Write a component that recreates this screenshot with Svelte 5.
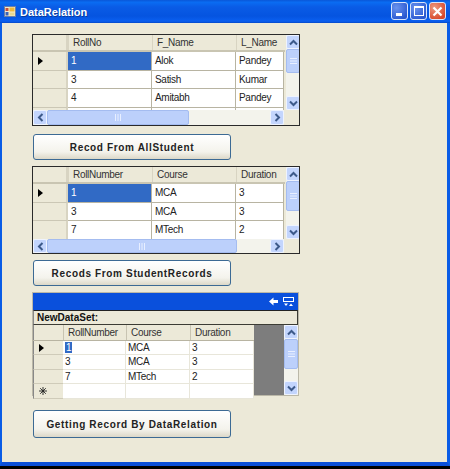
<script>
  const g1 = { h: 92, top: 75, vt: 24, cols: [['RollNo', 84], ['F_Name', 84], ['L_Name', 48]], rows: [['1','Alok','Pandey'],['3','Satish','Kumar'],['4','Amitabh','Pandey'],['','','']], thumb: 142 };
  const g2 = { h: 88, top: 72, vt: 30, cols: [['RollNumber', 84], ['Course', 84], ['Duration', 48]], rows: [['1','MCA','3'],['3','MCA','3'],['7','MTech','2']], thumb: 190 };
  const g3 = [['1','MCA','3'],['3','MCA','3'],['7','MTech','2'],['','','']];
</script>

{#snippet up()}
  <svg width="9" height="7" viewBox="0 0 9 7"><path d="M1 5.5L4.5 2L8 5.5" fill="none" stroke="#3d5a8a" stroke-width="2"/></svg>
{/snippet}
{#snippet down()}
  <svg width="9" height="7" viewBox="0 0 9 7"><path d="M1 1.5L4.5 5L8 1.5" fill="none" stroke="#3d5a8a" stroke-width="2"/></svg>
{/snippet}
{#snippet lines()}
  <svg width="7" height="8" viewBox="0 0 7 8"><path d="M0 1.5H7M0 4H7M0 6.5H7" stroke="#e8efff" stroke-width="1"/></svg>
{/snippet}
{#snippet marker()}
  <svg width="5" height="8" viewBox="0 0 5 8"><path d="M0 0L5 4L0 8Z" fill="#000"/></svg>
{/snippet}

{#snippet datagrid(g)}
  <div class="grid" style="height:{g.h}px">
    <div class="top" style="height:{g.top}px">
      <div class="table">
        <div class="tr head">
          <div class="rh"></div>
          {#each g.cols as c}<div class="th" style="width:{c[1]}px">{c[0]}</div>{/each}
        </div>
        {#each g.rows as r, i}
          <div class="tr body">
            <div class="rh">{#if i === 0}{@render marker()}{/if}</div>
            {#each r as v, j}
              <div class="td" class:sel={i === 0 && j === 0} style="width:{g.cols[j][1]}px">{v}</div>
            {/each}
          </div>
        {/each}
      </div>
      <div class="vbar">
        <div class="sbtn">{@render up()}</div>
        <div class="vthumb" style="height:{g.vt}px">{@render lines()}</div>
        <div class="vtrack"></div>
        <div class="sbtn">{@render down()}</div>
      </div>
    </div>
    <div class="hbar">
      <div class="hbtn"><svg width="7" height="9" viewBox="0 0 7 9"><path d="M5.5 1L2 4.5L5.5 8" fill="none" stroke="#3d5a8a" stroke-width="2"/></svg></div>
      <div class="hthumb" style="width:{g.thumb}px"><svg width="8" height="7" viewBox="0 0 8 7"><path d="M1.5 0V7M4 0V7M6.5 0V7" stroke="#e8efff"/></svg></div>
      <div class="htrack"></div>
      <div class="hbtn"><svg width="7" height="9" viewBox="0 0 7 9"><path d="M1.5 1L5 4.5L1.5 8" fill="none" stroke="#3d5a8a" stroke-width="2"/></svg></div>
      <div class="corner"></div>
    </div>
  </div>
{/snippet}

<div class="window">
  <header class="titlebar">
    <svg class="appicon" width="12" height="11" viewBox="0 0 12 11">
      <rect x="0.5" y="0.5" width="11" height="10" fill="#f2ead0" stroke="#6a7fa8"/>
      <rect x="1.5" y="2" width="3" height="3" fill="#c8503a"/>
      <rect x="5.5" y="1.5" width="5" height="4" fill="#f0b838"/>
      <rect x="1.5" y="6" width="3" height="3.5" fill="#3a62b8"/>
      <rect x="5.5" y="6.5" width="5" height="3" fill="#e8d890"/>
    </svg>
    <span class="title">DataRelation</span>
    <div class="controls">
      <div class="wbtn"><span class="min"></span></div>
      <div class="wbtn"><span class="max"></span></div>
      <div class="wbtn close">
        <svg width="11" height="11" viewBox="0 0 11 11"><path d="M1.5 1.5L9.5 9.5M9.5 1.5L1.5 9.5" stroke="#fff" stroke-width="2.2"/></svg>
      </div>
    </div>
  </header>
  <main class="client">
    {@render datagrid(g1)}
    <button class="btn b1">Recod From AllStudent</button>
    {@render datagrid(g2)}
    <button class="btn b2">Recods From StudentRecords</button>
    <div class="dg">
      <div class="caption">
        <svg width="9" height="9" viewBox="0 0 9 9"><path d="M0 4.5L4.5 0.5V3H9V6H4.5V8.5Z" fill="#fff"/></svg>
        <svg width="11" height="10" viewBox="0 0 11 10"><rect x="0.5" y="0.5" width="10" height="4" fill="none" stroke="#fff"/><path d="M1 6.5H5L3 9ZM6 9H10L8 6.5Z" fill="#fff"/></svg>
      </div>
      <div class="parent">NewDataSet:</div>
      <div class="dgmain">
        <div class="dgtable">
          <div class="dtr dhead">
            <div class="drh"></div>
            <div class="dth c1">RollNumber</div>
            <div class="dth c2">Course</div>
            <div class="dth c3">Duration</div>
          </div>
          {#each g3 as r, i}
            <div class="dtr">
              <div class="drh">
                {#if i === 0}{@render marker()}{/if}
                {#if i === 3}
                  <svg width="8" height="8" viewBox="0 0 8 8"><path d="M4 0V8M0 4H8M1.2 1.2L6.8 6.8M6.8 1.2L1.2 6.8" stroke="#222" stroke-width="0.9"/></svg>
                {/if}
              </div>
              <div class="dtd c1">{#if i === 0}<span class="hl">{r[0]}</span>{:else}{r[0]}{/if}</div>
              <div class="dtd c2">{r[1]}</div>
              <div class="dtd c3">{r[2]}</div>
            </div>
          {/each}
        </div>
        <div class="dgback"></div>
        <div class="vbar dvbar">
          <div class="sbtn">{@render up()}</div>
          <div class="vthumb dthumb">{@render lines()}</div>
          <div class="vtrack"></div>
          <div class="sbtn">{@render down()}</div>
        </div>
      </div>
    </div>
    <button class="btn b3">Getting Record By DataRelation</button>
  </main>
</div>

<style>
  :global(body) { margin: 0; background: #000; }
  * { box-sizing: border-box; }
  .window {
    width: 450px; height: 469px; display: flex; flex-direction: column; background: #000;
    font-family: "Liberation Sans", Arial, sans-serif; font-size: 10px; letter-spacing: -0.3px; color: #222;
  }
  .titlebar {
    height: 23px; flex: none; display: flex; align-items: center; padding: 0 4px;
    background: linear-gradient(#0a57d8 0%, #0a6cf2 10%, #0a5ce6 30%, #0554e0 70%, #0a5ff0 92%, #0648c8 100%);
  }
  .appicon { margin-right: 4px; }
  .title { color: #fff; font-weight: 700; font-size: 11px; letter-spacing: 0; text-shadow: 1px 1px 0 #0a3a9c; }
  .controls { margin-left: auto; display: flex; gap: 2px; margin-top: -1px; }
  .wbtn {
    width: 17px; height: 18px; border: 1px solid #d8e4fa; border-radius: 3px; position: relative;
    background: radial-gradient(circle at 30% 30%, #6a93ee, #2a58d0 80%);
    display: flex; align-items: center; justify-content: center;
  }
  .wbtn.close { background: radial-gradient(circle at 30% 30%, #ec9a80, #d8482a 80%); }
  .min { position: absolute; left: 4px; bottom: 3px; width: 6px; height: 3px; background: #fff; }
  .max { width: 10px; height: 10px; border: 1px solid #fff; border-top-width: 2px; }
  .client {
    flex: none; height: 443px; padding: 11px 0 0 30px;
    background: #ece9d8;
    border-left: 2px solid #0a5ce6; border-right: 3px solid #0a5ce6; border-bottom: 4px solid #0a4fd8;
  }

  .grid {
    width: 268px; border: 1px solid #2a2a2a; background: #ece9d8;
    display: flex; flex-direction: column; overflow: hidden;
  }
  .top { flex: none; display: flex; overflow: hidden; }
  .table { width: 252px; flex: none; overflow: hidden; }
  .tr { display: flex; }
  .tr.head { height: 17px; border-bottom: 2px solid #c9c5b2; }
  .tr.body { height: 18.6px; }
  .rh {
    width: 35px; flex: none; background: #ece9d8; border-bottom: 1px solid #cbc7b5; border-right: 2px solid #d8d4c2;
    display: flex; align-items: center; padding-left: 5px;
  }
  .head .rh { border-bottom: 0; }
  .th { padding-left: 4px; line-height: 16px; background: #ece9d8; border-left: 1px solid #d8d4c2; color: #333; }
  .td {
    background: #fff; padding-left: 3px; line-height: 17px; border-right: 1px solid #b8b4a2; border-bottom: 1px solid #b8b4a2;
  }
  .td.sel { background: #316ac5; color: #fff; }
  .vbar { width: 14px; flex: none; margin-left: 1px; background: #f3f3ec; display: flex; flex-direction: column; }
  .sbtn {
    height: 14px; flex: none; background: #c3d5fd; border: 1px solid #eef3ff; border-radius: 2px;
    display: flex; align-items: center; justify-content: center;
  }
  .vthumb {
    flex: none; background: #bcd0fb; border: 1px solid #a4bcf0; border-radius: 2px;
    display: flex; align-items: center; justify-content: center;
  }
  .vtrack { flex: 1; }
  .hbar { flex: 1; display: flex; background: #f3f3ec; }
  .hbtn {
    width: 14px; flex: none; background: #c3d5fd; border: 1px solid #eef3ff; border-radius: 2px;
    display: flex; align-items: center; justify-content: center;
  }
  .hthumb {
    flex: none; background: #bcd0fb; border: 1px solid #a4bcf0; border-radius: 2px;
    display: flex; align-items: center; justify-content: center;
  }
  .htrack { flex: 1; }
  .corner { width: 15px; flex: none; background: #ece9d8; }

  .btn {
    display: block; width: 198px; height: 26px; margin-left: 1px; padding: 0;
    font: inherit; font-size: 10px; font-weight: 700; letter-spacing: 0.65px; color: #222;
    border: 1px solid #3c6a94; border-radius: 3px;
    background: linear-gradient(#fff, #f4f3ec 70%, #dcd8c8);
  }
  .b1 { margin-top: 8px; margin-bottom: 6px; }
  .b2 { margin-top: 6px; margin-bottom: 6px; }
  .b3 { margin-top: 14px; height: 28px; }

  .dg { width: 267px; height: 104px; background: #ece9d8; border: 1px solid #bbb8a8; }
  .caption {
    height: 17px; background: #0a50dc; display: flex; align-items: center; justify-content: flex-end; gap: 5px; padding-right: 4px;
  }
  .parent {
    height: 15px; line-height: 14px; font-size: 10px; letter-spacing: 0; font-weight: 700; color: #111; padding-left: 3px; background: #ece9d8;
    border: 1px solid #3c3c34; border-top-color: #222; border-left-color: #888;
  }
  .dgmain { display: flex; height: 70px; }
  .dgtable { width: 221px; flex: none; background: #fff; }
  .dtr { display: flex; height: 14.4px; }
  .dhead { height: 16px; background: #ece9d8; border-bottom: 1px solid #b8b4a2; }
  .drh {
    width: 30px; flex: none; background: #ece9d8; border-bottom: 1px solid #cfcbb9;
    display: flex; align-items: center; padding-left: 5px; border-left: 1px solid #888;
  }
  .dhead .drh { border-bottom: 0; }
  .dth { line-height: 15px; padding-left: 4px; border-left: 1px solid #c8c4b2; color: #333; }
  .dtd { line-height: 13px; padding-left: 2px; background: #fff; border-right: 1px solid #e8e6da; border-bottom: 1px solid #e8e6da; }
  .c1 { width: 63px; }
  .c2 { width: 64px; }
  .c3 { width: 64px; }
  .hl { background: #316ac5; color: #fff; padding: 0 1px; }
  .dgback { width: 30px; flex: none; background: #7d7d7d; }
  .dvbar { width: 14px; margin-left: 0; }
  .dthumb { height: 30px; }
</style>
